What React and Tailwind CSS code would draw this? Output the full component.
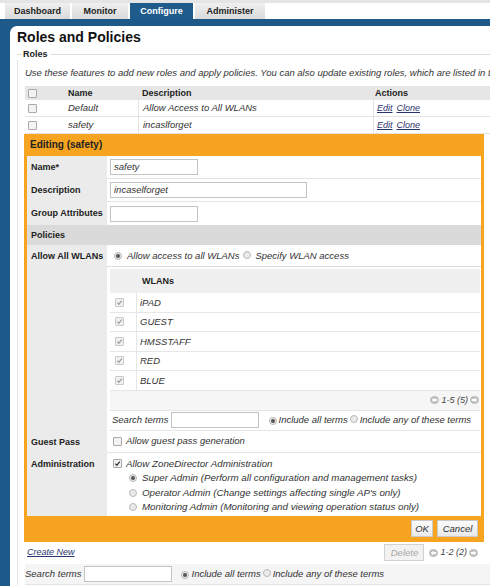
import React from "react";

const Radio = ({ checked }) => (
  <span className="inline-flex w-[8px] h-[8px] rounded-full border border-[#b8b8b8] bg-[#ebebeb] items-center justify-center shrink-0">
    {checked && <span className="w-[4px] h-[4px] rounded-full bg-[#555]" />}
  </span>
);

const Check = ({ checked, disabled }) => (
  <span
    className={
      disabled
        ? "inline-flex w-[9px] h-[9px] border border-[#cacaca] bg-[#f1f1f1] rounded-[1px] items-center justify-center shrink-0"
        : "inline-flex w-[9px] h-[9px] border border-[#a9a9a9] bg-[#f3f3f3] rounded-[1px] items-center justify-center shrink-0"
    }
  >
    {checked && (
      <svg viewBox="0 0 10 10" className="w-[7px] h-[7px]">
        <path d="M1.8 5.2 L4.1 7.5 L8.3 2.4" fill="none" stroke={disabled ? "#a0a0a0" : "#333"} strokeWidth="1.7" />
      </svg>
    )}
  </span>
);

const Arrow = ({ dir }) => (
  <svg width="9" height="8" viewBox="0 0 9 8" className="shrink-0">
    <ellipse cx="4.5" cy="4" rx="4.5" ry="4" fill="#bdbdbd" />
    <path d={dir === "l" ? "M1.6 4 L4.6 1.7 V3 H7.2 V5 H4.6 V6.3Z" : "M7.4 4 L4.4 1.7 V3 H1.8 V5 H4.4 V6.3Z"} fill="#fff" />
  </svg>
);

const Pager = ({ text }) => (
  <div className="flex items-center gap-[2px] italic text-[#444]">
    <Arrow dir="l" />
    <span>{text}</span>
    <Arrow dir="r" />
  </div>
);

const Btn = ({ children, w, disabled }) => (
  <div
    className={
      disabled
        ? "h-[17px] flex items-center justify-center border border-[#d2d2d2] bg-[#f2f2f2] italic text-[9.5px] text-[#a8a8a8] " + w
        : "h-[17px] flex items-center justify-center border border-[#c9c9c9] bg-gradient-to-b from-[#fbfbfb] to-[#e9e9e9] italic text-[9.5px] text-[#333] " + w
    }
  >
    {children}
  </div>
);

const Label = ({ children, className = "" }) => (
  <div className={"w-[80px] shrink-0 bg-[#ebebeb] pl-[4px] font-bold leading-[12px] " + className}>{children}</div>
);

const Input = ({ w, value }) => (
  <div className={"h-[16px] border border-[#c3c3c3] bg-white italic text-[9.5px] text-[#333] pl-[3px] flex items-center " + w}>
    {value}
  </div>
);

const wlans = ["iPAD", "GUEST", "HMSSTAFF", "RED", "BLUE"];

export default function App() {
  return (
    <div className="w-[490px] h-[586px] overflow-hidden bg-[#1d5a8a] font-['Liberation_Sans',Arial,sans-serif] text-[9px] text-[#222] leading-none">
      {/* tabs */}
      <div className="h-[19px] bg-white border-t-[3px] border-[#e5e5e5] flex pl-[5px] gap-[2px] font-bold">
        <div className="w-[65px] h-[16px] bg-gradient-to-b from-[#f0f0f0] to-[#d9d9d9] flex items-center justify-center">Dashboard</div>
        <div className="w-[56px] h-[16px] bg-gradient-to-b from-[#f0f0f0] to-[#d9d9d9] flex items-center justify-center">Monitor</div>
        <div className="w-[63px] h-[16px] bg-[#1f5b8b] text-white flex items-center justify-center">Configure</div>
        <div className="w-[70px] h-[16px] bg-gradient-to-b from-[#f0f0f0] to-[#d9d9d9] flex items-center justify-center">Administer</div>
      </div>
      <div className="h-[7px]" />
      <div className="flex h-[560px]">
        <div className="w-[10px] shrink-0" />
        <div className="w-[500px] shrink-0 bg-white rounded-tl-[7px] overflow-hidden">
          <div className="pt-[3px] pl-[7px] text-[14px] font-bold leading-[17px] text-[#111]">Roles and Policies</div>
          {/* fieldset legend line */}
          <div className="flex items-center h-[12px] mt-[2px] ml-[7px]">
            <div className="w-[5px] border-t border-[#dcdcdc]" />
            <span className="px-[1px] font-bold text-[9px]">Roles</span>
            <div className="flex-1 border-t border-[#dcdcdc] ml-[2px]" />
          </div>
          <div className="ml-[7px] border-l border-[#e2e2e2] pl-[7px]">
            <div className="pt-[7px] w-[465px] overflow-hidden italic text-[9.5px] leading-[12px] whitespace-nowrap text-[#333]">
              Use these features to add new roles and apply policies. You can also update existing roles, which are listed in t
            </div>
            {/* roles table */}
            <div className="mt-[7px] w-[480px]">
              <div className="flex h-[14px] bg-[#e6e6e6] font-bold items-center">
                <div className="w-[40px] pl-[3px] flex items-center"><Check /></div>
                <div className="w-[73px] pl-[3px]">Name</div>
                <div className="w-[235px] pl-[4px]">Description</div>
                <div className="flex-1 pl-[2px]">Actions</div>
              </div>
              {[
                ["Default", "Allow Access to All WLANs"],
                ["safety", "incaslforget"],
              ].map(([n, d]) => (
                <div key={n} className="flex h-[17px] border-b border-[#e3e3e3] items-stretch italic text-[9.5px] text-[#333]">
                  <div className="w-[40px] pl-[3px] flex items-center"><Check /></div>
                  <div className="w-[73px] pl-[3px] flex items-center">{n}</div>
                  <div className="w-[235px] pl-[4px] flex items-center border-l border-[#e3e3e3]">{d}</div>
                  <div className="flex-1 pl-[3px] flex items-center gap-[4px] border-l border-[#e3e3e3] text-[9px] text-[#2a3370]">
                    <span className="underline">Edit</span>
                    <span className="underline">Clone</span>
                  </div>
                </div>
              ))}
            </div>
            {/* editing panel */}
            <div className="-ml-[1px] w-[460px] border-x-[3px] border-[#f7a520] bg-white">
              <div className="h-[22px] -mx-[3px] bg-[#f7a520] pl-[6px] flex items-center font-bold text-[10px] text-[#222]">Editing (safety)</div>
              <div className="flex h-[23px]">
                <Label className="pt-[5px]">Name*</Label>
                <div className="flex-1 border-b border-[#e4e4e4] pl-[3px] pt-[3px]"><Input w="w-[88px]" value="safety" /></div>
              </div>
              <div className="flex h-[23px]">
                <Label className="pt-[5px]">Description</Label>
                <div className="flex-1 border-b border-[#e4e4e4] pl-[3px] pt-[3px]"><Input w="w-[197px]" value="incaselforget" /></div>
              </div>
              <div className="flex h-[23px]">
                <Label className="pt-[5px]">Group Attributes</Label>
                <div className="flex-1 pl-[3px] pt-[4px]"><Input w="w-[88px]" value="" /></div>
              </div>
              <div className="h-[20px] bg-[#dadada] pl-[4px] font-bold flex items-center">Policies</div>
              <div className="flex">
                <Label className="pt-[5px]">Allow All WLANs</Label>
                <div className="flex-1">
                  <div className="h-[22px] border-b border-[#dedede] flex items-center pl-[7px] italic text-[9.5px] text-[#333]">
                    <Radio checked />
                    <span className="ml-[5px]">Allow access to all WLANs</span>
                    <span className="ml-[4px]"><Radio /></span>
                    <span className="ml-[4px]">Specify WLAN access</span>
                  </div>
                  <div className="ml-[3px] mr-[1px] mt-[2px]">
                    <div className="h-[24px] bg-[#f0f0f0] pl-[32px] font-bold flex items-center">WLANs</div>
                    {wlans.map((w) => (
                      <div key={w} className="h-[19.5px] flex border-b border-[#e6e6e6] italic text-[9.5px] text-[#333]">
                        <div className="w-[27px] border-r border-[#e6e6e6] flex items-center pl-[5px]"><Check checked disabled /></div>
                        <div className="pl-[3px] flex items-center">{w}</div>
                      </div>
                    ))}
                    <div className="h-[19px] bg-[#f6f6f7] flex items-center justify-end pr-[1px]">
                      <Pager text="1-5 (5)" />
                    </div>
                    <div className="h-[21px] border-t border-b border-[#e6e6e6] flex items-center italic text-[9.5px] text-[#333] pl-[2px]">
                      <span>Search terms</span>
                      <div className="ml-[2px]"><Input w="w-[88px]" value="" /></div>
                      <span className="ml-[10px]"><Radio checked /></span>
                      <span className="ml-[2px]">Include all terms</span>
                      <span className="ml-[2px]"><Radio /></span>
                      <span className="ml-[2px]">Include any of these terms</span>
                    </div>
                  </div>
                </div>
              </div>
              <div className="flex h-[22px]">
                <Label className="pt-[5px]">Guest Pass</Label>
                <div className="flex-1 border-b border-[#e4e4e4] flex items-center pl-[6px] italic text-[9.5px] text-[#333]">
                  <Check />
                  <span className="ml-[4px]">Allow guest pass generation</span>
                </div>
              </div>
              <div className="flex h-[63px]">
                <Label className="pt-[5px]">Administration</Label>
                <div className="flex-1 pl-[6px] pt-[5px] italic text-[9.75px] text-[#333] flex flex-col gap-[2.5px]">
                  <div className="flex items-center h-[12px]"><Check checked /><span className="ml-[4px]">Allow ZoneDirector Administration</span></div>
                  <div className="flex items-center h-[12px] pl-[16px]"><Radio checked /><span className="ml-[5px]">Super Admin (Perform all configuration and management tasks)</span></div>
                  <div className="flex items-center h-[12px] pl-[16px]"><Radio /><span className="ml-[5px]">Operator Admin (Change settings affecting single AP's only)</span></div>
                  <div className="flex items-center h-[12px] pl-[16px]"><Radio /><span className="ml-[5px]">Monitoring Admin (Monitoring and viewing operation status only)</span></div>
                </div>
              </div>
              <div className="h-[26px] -mx-[3px] bg-[#f7a520] flex items-center justify-end gap-[4px] pr-[6px]">
                <Btn w="w-[22px]">OK</Btn>
                <Btn w="w-[41px]">Cancel</Btn>
              </div>
            </div>
            {/* below */}
            <div className="-ml-[1px] w-[460px] h-[22px] flex items-center justify-between pl-[3px] pr-[6px]">
              <span className="italic underline text-[#2a3370]">Create New</span>
              <div className="flex items-center gap-[5px]">
                <Btn w="w-[40px]" disabled>Delete</Btn>
                <Pager text="1-2 (2)" />
              </div>
            </div>
            <div className="h-[21px] w-[480px] bg-[#f5f5f5] border-b border-[#e4e4e4] flex items-center italic text-[9.5px] text-[#333]">
              <span>Search terms</span>
              <div className="ml-[2px]"><Input w="w-[88px]" value="" /></div>
              <span className="ml-[9px]"><Radio checked /></span>
              <span className="ml-[3px]">Include all terms</span>
              <span className="ml-[2px]"><Radio /></span>
              <span className="ml-[2px]">Include any of these terms</span>
            </div>
          </div>
        </div>
      </div>
    </div>
  );
}
